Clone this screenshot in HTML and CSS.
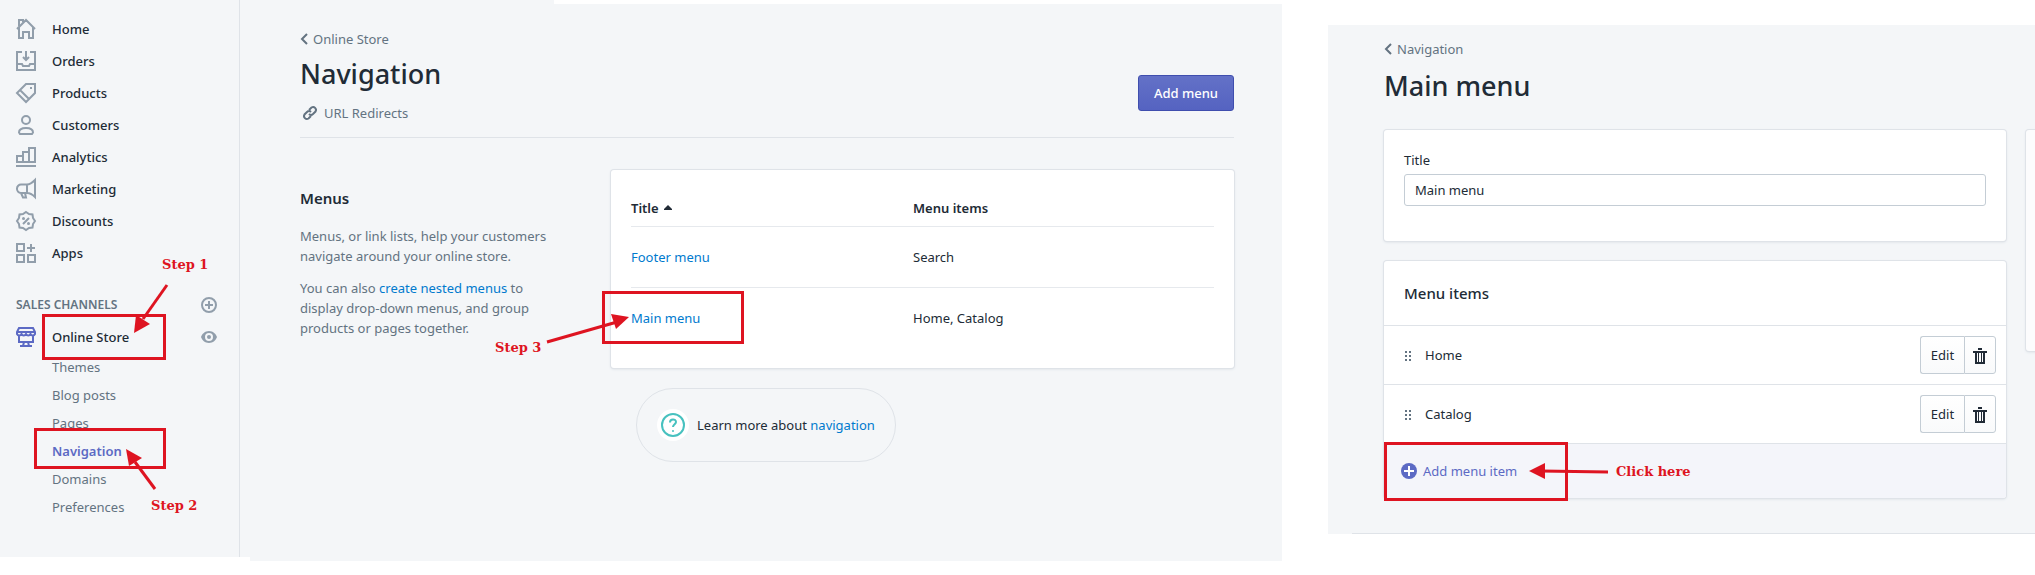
FILE: index.html
```html
<!DOCTYPE html>
<html lang="en">
<head>
<meta charset="utf-8">
<title>Navigation</title>
<link rel="stylesheet" href="styles.css">
</head>
<body>
<div class="guide">
  <aside class="sidebar">
    <nav class="sidebar-inner">
      <ul class="nav-list">
        <li><a class="nav-item" href="#"><svg class="icon" viewBox="0 0 20 20"><path d="M1 10 10 1l9 9M3 8v11h4v-6h6v6h4V8M3 7V1h4v2"/></svg>Home</a></li>
        <li><a class="nav-item" href="#"><svg class="icon" viewBox="0 0 20 20"><path d="M6 1H1v18h18V1h-5M1 13h5l1 2h6l1-2h5M10 0v8M7 6l3 3 3-3"/></svg>Orders</a></li>
        <li><a class="nav-item" href="#"><svg class="icon" viewBox="0 0 20 20"><path d="M10 1h9v9l-9 9-9-9zM4 7l9 9"/><path class="fill" d="M14 4h2v2h-2z"/></svg>Products</a></li>
        <li><a class="nav-item" href="#"><svg class="icon" viewBox="0 0 20 20"><circle cx="10" cy="5" r="4"/><path d="M3 17.500c0-3 3-4.500 7-4.500s7 1.500 7 4.500L16 19H4z"/></svg>Customers</a></li>
        <li><a class="nav-item" href="#"><svg class="icon" viewBox="0 0 20 20"><path d="M1 15V9h6v6zM7 15V5h6v10zM13 15V1h6v14zM0 19h20"/></svg>Analytics</a></li>
        <li><a class="nav-item" href="#"><svg class="icon" viewBox="0 0 20 20"><path d="M19 1v17c-3-3-5-4-8-4H5a4 4 0 0 1-4-4.500A4 4 0 0 1 5 5.500h6c3 0 5-1.500 8-4.500zM11 5.500V14M5 14l2 4.500h3L9 14"/></svg>Marketing</a></li>
        <li><a class="nav-item" href="#"><svg class="icon" viewBox="0 0 20 20"><path d="m10 1 3 2 3.500.5.5 3.500 2 3-2 3-.5 3.500-3.500.5-3 2-3-2-3.500-.5L3 13l-2-3 2-3 .5-3.500L7 3zM7 13l6-6"/><circle class="fill" cx="7.500" cy="7.500" r="1.500"/><circle class="fill" cx="12.500" cy="12.500" r="1.500"/></svg>Discounts</a></li>
        <li><a class="nav-item" href="#"><svg class="icon" viewBox="0 0 20 20"><path d="M1 1h7v7H1zM1 12h7v7H1zM12 12h7v7h-7zM15 1v8M11 5h8"/></svg>Apps</a></li>
      </ul>
      <div class="section-head">
        <h2 class="section-title">Sales channels</h2>
        <button class="icon-button" type="button" aria-label="Add sales channel"><svg class="icon small" viewBox="0 0 16 16"><circle cx="8" cy="8" r="7"/><path d="M8 4v8M4 8h8"/></svg></button>
      </div>
      <div class="channel">
        <a class="nav-item" href="#"><svg class="icon active" viewBox="0 0 20 20"><path d="M3 1h14l2 4v2a2.500 2.500 0 0 1-4.500 0 2.500 2.500 0 0 1-4.500 0 2.500 2.500 0 0 1-4.500 0A2.500 2.500 0 0 1 1 7V5zM1 5h18M3 9v6h14V9M8 15l-1 4M12 15l1 4M4 19h12"/></svg>Online Store</a>
        <button class="icon-button" type="button" aria-label="View online store"><svg class="icon small" viewBox="0 0 16 16"><path class="fill" fill-rule="evenodd" d="M8 2C4 2 1 5 0 8c1 3 4 6 8 6s7-3 8-6c-1-3-4-6-8-6zm0 2a4 4 0 1 1 0 8 4 4 0 0 1 0-8z"/><circle class="fill" cx="8" cy="8" r="2"/></svg></button>
      </div>
      <ul class="sub-list">
        <li><a href="#">Themes</a></li>
        <li><a href="#">Blog posts</a></li>
        <li><a href="#">Pages</a></li>
        <li><a class="current" href="#">Navigation</a></li>
        <li><a href="#">Domains</a></li>
        <li><a href="#">Preferences</a></li>
      </ul>
    </nav>
    <span class="mark mark-store"></span>
    <span class="mark mark-navigation"></span>
    <svg class="arrow arrow-one" viewBox="0 0 40 54" width="40" height="54"><path class="shaft" d="M36 4 12 38"/><path class="head" d="m3 52 2-18 14 9z"/></svg>
    <svg class="arrow arrow-two" viewBox="0 0 36 46" width="36" height="46"><path class="shaft" d="M31 42 11 15"/><path class="head" d="m2 2 16 9-13 8z"/></svg>
    <span class="note note-one">Step 1</span>
    <span class="note note-two">Step 2</span>
  </aside>

  <main class="main">
    <header class="page-head">
      <div>
        <a class="breadcrumb" href="#"><svg class="chevron" viewBox="0 0 8 12"><path d="M7 1 2 6l5 5"/></svg>Online Store</a>
        <h1 class="title">Navigation</h1>
        <a class="redirects" href="#"><svg class="link-icon" viewBox="0 0 16 16"><path d="m7 5 2.500-2.500a2.900 2.900 0 0 1 4 4L11 9a2.900 2.900 0 0 1-4 0M9 11l-2.500 2.500a2.900 2.900 0 0 1-4-4L5 7a2.900 2.900 0 0 1 4 0"/></svg>URL Redirects</a>
      </div>
      <button class="primary" type="button">Add menu</button>
    </header>
    <div class="columns">
      <section class="about">
        <h2 class="heading">Menus</h2>
        <p>Menus, or link lists, help your customers navigate around your online store.</p>
        <p>You can also <a class="link" href="#">create nested menus</a> to display drop-down menus, and group products or pages together.</p>
      </section>
      <div class="content">
        <div class="card table-card">
          <table class="menus">
            <thead><tr><th scope="col">Title <svg class="sort" viewBox="0 0 8 5"><path d="M4 0 8 4v1H0V4z"/></svg></th><th scope="col">Menu items</th></tr></thead>
            <tbody>
              <tr><td><a class="link" href="#">Footer menu</a></td><td>Search</td></tr>
              <tr><td><a class="link" href="#">Main menu</a></td><td>Home, Catalog</td></tr>
            </tbody>
          </table>
          <span class="mark mark-main-menu"></span>
          <svg class="arrow arrow-three" viewBox="0 0 90 36" width="90" height="36"><path class="shaft" d="m3 30 70-20"/><path class="head" d="M85 5 67 2l5 15z"/></svg>
          <span class="note note-three">Step 3</span>
        </div>
        <div class="help">
          <svg class="help-icon" viewBox="0 0 32 32"><circle class="disc" cx="16" cy="16" r="16"/><circle cx="16" cy="16" r="11"/><path d="M13 13.500c0-4 6-4 6-.5 0 2-3 2.500-3 5"/><circle class="dot" cx="16" cy="22" r="1"/></svg>
          <span>Learn more about <a class="link" href="#">navigation</a></span>
        </div>
      </div>
    </div>
  </main>

  <section class="editor">
    <a class="breadcrumb" href="#"><svg class="chevron" viewBox="0 0 8 12"><path d="M7 1 2 6l5 5"/></svg>Navigation</a>
    <h1 class="title">Main menu</h1>
    <div class="editor-grid">
      <div class="stack">
        <div class="card field-card">
          <label for="menu-title">Title</label>
          <input id="menu-title" class="text-field" type="text" value="Main menu">
        </div>
        <div class="card">
          <h2 class="heading card-heading">Menu items</h2>
          <ul class="items">
            <li class="item">
              <svg class="grip" viewBox="0 0 6 10"><path d="M0 0h2v2H0zM4 0h2v2H4zM0 4h2v2H0zM4 4h2v2H4zM0 8h2v2H0zM4 8h2v2H4z"/></svg>
              <span class="item-name">Home</span>
              <span class="actions"><button type="button">Edit</button><button type="button" aria-label="Delete Home"><svg class="trash" viewBox="0 0 14 16"><path d="M5 0h4v2H5zM0 3h14v2h-2v11H2V5H0zM4 5v9h1V5zm2 0v9h2V5zm3 0v9h1V5z" fill-rule="evenodd"/></svg></button></span>
            </li>
            <li class="item">
              <svg class="grip" viewBox="0 0 6 10"><path d="M0 0h2v2H0zM4 0h2v2H4zM0 4h2v2H0zM4 4h2v2H4zM0 8h2v2H0zM4 8h2v2H4z"/></svg>
              <span class="item-name">Catalog</span>
              <span class="actions"><button type="button">Edit</button><button type="button" aria-label="Delete Catalog"><svg class="trash" viewBox="0 0 14 16"><path d="M5 0h4v2H5zM0 3h14v2h-2v11H2V5H0zM4 5v9h1V5zm2 0v9h2V5zm3 0v9h1V5z" fill-rule="evenodd"/></svg></button></span>
            </li>
          </ul>
          <div class="add-row">
            <button class="add-item" type="button"><svg class="plus" viewBox="0 0 16 16"><circle cx="8" cy="8" r="8"/><path d="M8 3v10M3 8h10"/></svg>Add menu item</button>
            <span class="mark mark-add"></span>
            <svg class="arrow arrow-four" viewBox="0 0 84 20" width="84" height="20"><path class="shaft" d="M81 11 14 10"/><path class="head" d="M2 10 18 2v16z"/></svg>
            <span class="note note-four">Click here</span>
          </div>
        </div>
      </div>
      <div class="card side-card"></div>
    </div>
  </section>
</div>
</body>
</html>
```
FILE: styles.css
```css
* { box-sizing: border-box; }

body {
  margin: 0;
  background: #fff;
  color: #212b36;
  font: 13px/20px "Noto Sans", "Open Sans", sans-serif;
}

h1, h2, p, ul { margin: 0; padding: 0; }
ul { list-style: none; }
a { color: inherit; text-decoration: none; }
button, input { font: inherit; color: inherit; }
svg { flex: none; overflow: visible; }

/* Sidebar, navigation page, gutter, menu editor */
.guide {
  display: grid;
  grid-template-columns: 250px minmax(0, 1032fr) 46px minmax(0, 707fr);
  align-items: start;
  overflow: hidden;
}

/* Sidebar */
.sidebar {
  position: relative;
  background: #f4f6f8;
}
.sidebar-inner {
  width: 240px;
  padding: 13px 0 36px;
  border-right: 1px solid #dfe3e8;
}
.nav-item {
  display: flex;
  align-items: center;
  gap: 16px;
  height: 32px;
  padding-left: 16px;
  font-weight: 500;
}
.icon {
  width: 20px;
  height: 20px;
  fill: none;
  stroke: #919eab;
  stroke-width: 2;
}
.icon .fill { fill: #919eab; stroke: none; }
.icon.active { stroke: #5c6ac4; }
.icon.small { width: 16px; height: 16px; }
.section-head, .channel {
  display: flex;
  align-items: center;
  justify-content: space-between;
  height: 32px;
  padding-right: 22px;
}
.section-head { margin-top: 20px; padding-left: 16px; }
.section-title {
  color: #637381;
  font-size: 12px;
  font-weight: 600;
  text-transform: uppercase;
}
.icon-button {
  display: flex;
  padding: 0;
  border: 0;
  background: none;
}
.sub-list { padding-left: 52px; color: #637381; line-height: 28px; }
.sub-list .current { color: #5c6ac4; font-weight: 600; }

/* Navigation page */
.main {
  padding: 29px 48px 99px 50px;
  background: linear-gradient(#fff, #fff) right top / calc(100% - 304px) 4px no-repeat #f4f6f8;
}
.page-head {
  display: flex;
  align-items: flex-start;
  justify-content: space-between;
  height: 109px;
  border-bottom: 1px solid #dfe3e8;
}
.breadcrumb {
  display: flex;
  align-items: center;
  gap: 5px;
  color: #637381;
}
.chevron {
  width: 8px;
  height: 12px;
  fill: none;
  stroke: #637381;
  stroke-width: 2;
}
.title {
  padding: 9px 0 7px;
  font-size: 27px;
  font-weight: 500;
  line-height: 32px;
}
.redirects {
  display: flex;
  align-items: center;
  gap: 6px;
  padding: 6px 0 0 2px;
  color: #637381;
}
.link-icon {
  width: 16px;
  height: 16px;
  fill: none;
  stroke: #637381;
  stroke-width: 2;
}
.primary {
  height: 36px;
  margin-top: 46px;
  padding: 0 15px;
  border: 1px solid #3f4eae;
  border-radius: 3px;
  background: linear-gradient(#6371c7, #5563c1);
  color: #fff;
  font-weight: 500;
}
.columns {
  display: grid;
  grid-template-columns: 311fr 623fr;
  padding-top: 32px;
}
.about { padding: 16px 56px 0 0; color: #637381; }
.heading {
  color: #212b36;
  font-size: 15px;
  font-weight: 500;
  line-height: 24px;
}
.about p { padding-top: 12px; }
.about .heading { padding-bottom: 4px; font-weight: 600; }
.link { color: #007ace; }
.card {
  border-radius: 3px;
  background: #fff;
  box-shadow: 0 0 0 1px #dfe3e8, 0 1px 3px #d3d9e0;
}
.table-card { position: relative; padding: 20px; }
.menus { width: 100%; border-collapse: collapse; table-layout: fixed; }
.menus th, .menus td { padding: 0; text-align: left; }
.menus th:first-child { width: 282px; }
.menus th { height: 36px; font-weight: 600; }
.menus td { height: 61px; border-top: 1px solid #e6e9ed; }
.sort { width: 8px; height: 5px; margin-left: 2px; vertical-align: 3px; fill: #212b36; }
.help {
  display: flex;
  align-items: center;
  gap: 8px;
  width: fit-content;
  height: 74px;
  margin: 20px 0 0 25px;
  padding: 0 20px;
  border: 1px solid #dfe3e8;
  border-radius: 37px;
}
.help-icon {
  width: 32px;
  height: 32px;
  fill: none;
  stroke: #47c1bf;
  stroke-width: 2;
}
.help-icon .disc { fill: #fff; stroke: none; }
.help-icon .dot { fill: #47c1bf; stroke: none; }

/* Menu editor */
.editor {
  grid-column: 4;
  margin-top: 25px;
  padding: 14px 0 36px 56px;
  overflow: hidden;
  background: linear-gradient(#dfe3e8, #dfe3e8) right bottom / calc(100% - 24px) 1px no-repeat #f4f6f8;
}
.editor .title { padding: 11px 0 28px; }
.editor-grid {
  display: grid;
  grid-template-columns: 1fr 9px;
  gap: 20px;
  align-items: start;
}
.stack { display: grid; gap: 20px; }
.field-card { padding: 20px 20px 35px; }
.field-card label { display: block; padding-bottom: 4px; }
.text-field {
  display: block;
  width: 100%;
  height: 32px;
  padding: 0 10px;
  border: 1px solid #c4cdd5;
  border-radius: 3px;
  background: #fff;
}
.card-heading { padding: 20px; }
.item {
  display: flex;
  align-items: center;
  height: 59px;
  padding: 0 10px 0 21px;
  border-top: 1px solid #dfe3e8;
}
.grip { width: 6px; height: 10px; margin-top: 2px; fill: #637381; }
.item-name { flex: 1; padding-left: 14px; }
.actions { display: flex; }
.actions button {
  display: flex;
  align-items: center;
  justify-content: center;
  width: 32px;
  height: 38px;
  padding: 0;
  border: 1px solid #c4cdd5;
  border-radius: 0 3px 3px 0;
  background: linear-gradient(#fff, #f9fafb);
}
.actions button:first-child {
  width: 44px;
  border-right: 0;
  border-radius: 3px 0 0 3px;
}
.trash { width: 14px; height: 16px; margin-top: 2px; fill: #212b36; }
.add-row {
  position: relative;
  display: flex;
  align-items: center;
  height: 55px;
  padding-left: 17px;
  border-top: 1px solid #dfe3e8;
  border-radius: 0 0 3px 3px;
  background: #f4f5fa;
}
.add-item {
  display: flex;
  align-items: center;
  gap: 6px;
  padding: 0;
  border: 0;
  background: none;
  color: #5c6ac4;
}
.plus { width: 16px; height: 16px; fill: #5c6ac4; stroke: #fff; stroke-width: 2; }
.plus circle { stroke: none; }
.side-card { width: 40px; height: 221px; background: #fcfcfd; }

/* Tutorial annotations laid over the pages */
.mark, .arrow, .note { position: absolute; pointer-events: none; }
.mark { border: 3px solid #de1421; }
.arrow .shaft { fill: none; stroke: #de1421; stroke-width: 3; }
.arrow .head { fill: #de1421; }
.note {
  color: #de1421;
  font: 600 13px/20px "Roboto Slab", "DejaVu Serif", serif;
  white-space: nowrap;
}
.mark-store { left: 42px; top: 314px; width: 124px; height: 46px; }
.mark-navigation { left: 34px; top: 428px; width: 132px; height: 41px; }
.arrow-one { left: 131px; top: 281px; }
.arrow-two { left: 124px; top: 447px; }
.note-one { left: 162px; top: 255px; }
.note-two { left: 151px; top: 496px; }
.mark-main-menu { left: -9px; top: 121px; width: 142px; height: 53px; }
.arrow-three { left: -67px; top: 142px; }
.note-three { left: -116px; top: 168px; }
.mark-add { left: 0; top: -2px; width: 184px; height: 59px; }
.arrow-four { left: 143px; top: 17px; }
.note-four { left: 232px; top: 18px; }
```
